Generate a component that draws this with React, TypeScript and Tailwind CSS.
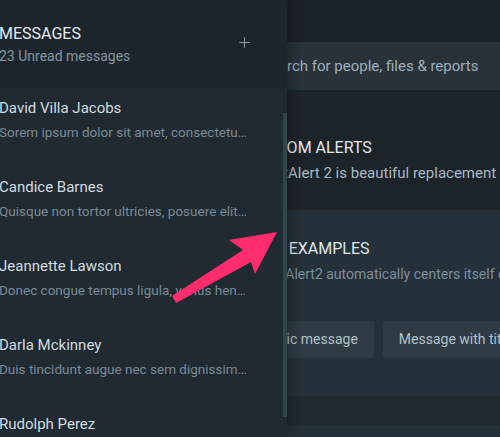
import { Plus } from "lucide-react"

const messages = [
  { name: "David Villa Jacobs", text: "Sorem ipsum dolor sit amet, consectetur adipiscing elit" },
  { name: "Candice Barnes", text: "Quisque non tortor ultricies, posuere elit id, dignissim" },
  { name: "Jeannette Lawson", text: "Donec congue tempus ligula, varius hendrerit mi" },
  { name: "Darla Mckinney", text: "Duis tincidunt augue nec sem dignissim scelerisque" },
  { name: "Rudolph Perez", text: "Pellentesque semper tortor id ligula ultrices" },
]

const App = () => {
  return (
    <div className="relative w-[500px] h-[437px] overflow-hidden bg-[#1c2329] font-['Roboto',sans-serif]">
      {/* main page */}
      <div className="flex flex-col w-full h-full">
        <div className="h-[42px] bg-[#1b2228]" />
        <div className="h-[48px] bg-[#27323b] flex items-center pl-[262px] text-[15px] text-[#9fb0bd] whitespace-nowrap">
          Search for people, files &amp; reports
        </div>
        <div className="h-[120px] bg-[#1c2329] pl-[247px] pt-[48px] whitespace-nowrap">
          <h2 className="text-[16px] leading-[20px] text-[#e2e8ec]">CUSTOM ALERTS</h2>
          <p className="mt-[5px] text-[15px] leading-[20px] text-[#a9b9c4]">SweetAlert 2 is beautiful replacement for javascript alerts</p>
        </div>
        <div className="h-[186px] bg-[#25313a] pl-[247px] pt-[29px] whitespace-nowrap">
          <h2 className="-ml-[7px] text-[16px] leading-[20px] text-[#dfe6ea]">BASIC EXAMPLES</h2>
          <p className="mt-[5px] text-[14px] leading-[20px] text-[#7d8e9a]">SweetAlert2 automatically centers itself on the page</p>
          <div className="flex gap-[9px] mt-[37px]">
            <button className="h-[37px] px-[16px] bg-[#2e3b45] text-[14px] text-[#b3c0c9] rounded-[2px]">Basic message</button>
            <button className="h-[37px] px-[16px] bg-[#2e3b45] text-[14px] text-[#b3c0c9] rounded-[2px]">Message with title</button>
          </div>
        </div>
        <div className="h-[30px] bg-[#1f2a31]" />
        <div className="flex-1 bg-[#25313a]" />
      </div>

      {/* messages drawer */}
      <div className="absolute left-0 top-0 w-[287px] h-full flex flex-col bg-[#1f2a32] shadow-[4px_0_10px_rgba(0,0,0,0.25)]">
        <div className="h-[88px] bg-[#1c252c] flex items-center justify-between pr-[34px] shrink-0">
          <div className="-ml-[1px]">
            <div className="text-[16px] leading-[20px] text-[#e4eaee]">MESSAGES</div>
            <div className="mt-[3px] text-[14px] leading-[18px] text-[#8696a1]">23 Unread messages</div>
          </div>
          <Plus size={17} strokeWidth={1.3} className="text-[#8fa0ab] -mt-[3px]" />
        </div>
        <div className="relative flex-1 overflow-hidden pt-[9px]">
          {messages.map((m) => (
            <div key={m.name} className="h-[79px] -ml-[1px] w-[250px]">
              <div className="text-[15px] leading-[22px] text-[#d3dbe0]">{m.name}</div>
              <div className="mt-[4px] text-[13.5px] leading-[18px] text-[#7b8b97] truncate">{m.text}</div>
            </div>
          ))}
          {/* scrollbar */}
          <div className="absolute right-0 top-[25px] w-[4px] h-[304px] bg-[#34444f]" />
        </div>
      </div>

      {/* annotation arrow */}
      <svg className="absolute left-0 top-0" width="500" height="437" viewBox="0 0 500 437">
        <polygon
          points="277,232 229,240 243,250 172,296 176,303 251,262 255,274"
          fill="#ff2d6c"
        />
      </svg>
    </div>
  )
}

export default App
